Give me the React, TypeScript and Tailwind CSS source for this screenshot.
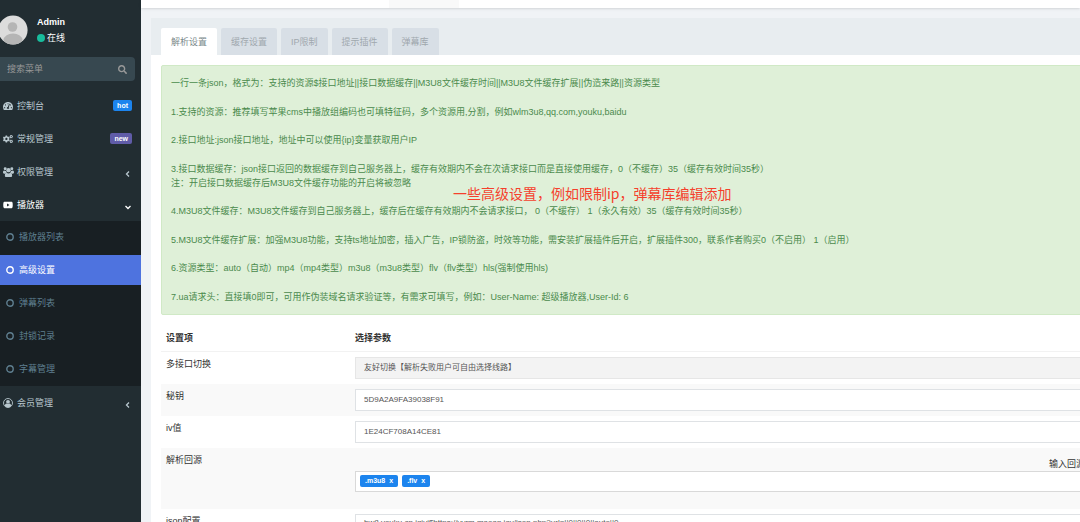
import type { ReactNode } from 'react';
import { FaCogs, FaSearch, FaTachometerAlt, FaYoutube } from 'react-icons/fa';
import clsx from 'clsx';

const tabs = ['解析设置', '缓存设置', 'IP限制', '提示插件', '弹幕库'];

const subMenu = ['播放器列表', '高级设置', '弹幕列表', '封锁记录', '字幕管理'];

const notes = [
  ['一行一条json，格式为：支持的资源$接口地址||接口数据缓存||M3U8文件缓存时间||M3U8文件缓存扩展||伪造来路||资源类型'],
  ['1.支持的资源：推荐填写苹果cms中播放组编码也可填特征码，多个资源用,分割，例如wlm3u8,qq.com,youku,baidu'],
  ['2.接口地址:json接口地址，地址中可以使用{ip}变量获取用户IP'],
  [
    '3.接口数据缓存：json接口返回的数据缓存到自己服务器上，缓存有效期内不会在次请求接口而是直接使用缓存，0（不缓存）35（缓存有效时间35秒）',
    '注：开启接口数据缓存后M3U8文件缓存功能的开启将被忽略',
  ],
  ['4.M3U8文件缓存：M3U8文件缓存到自己服务器上，缓存后在缓存有效期内不会请求接口， 0（不缓存） 1（永久有效）35（缓存有效时间35秒）'],
  ['5.M3U8文件缓存扩展：加强M3U8功能，支持ts地址加密，插入广告，IP锁防盗，时效等功能，需安装扩展插件后开启，扩展插件300，联系作者购买0（不启用） 1（启用）'],
  ['6.资源类型：auto（自动）mp4（mp4类型）m3u8（m3u8类型）flv（flv类型）hls(强制使用hls)'],
  ['7.ua请求头：直接填0即可，可用作伪装域名请求验证等，有需求可填写，例如：User-Name: 超级播放器,User-Id: 6'],
];

const GroupIcon = () => (
  <svg viewBox="0 0 20 18" className="h-[10px] w-[11px]" fill="currentColor" aria-hidden="true">
    <circle cx="4" cy="3.2" r="2.7" />
    <circle cx="16" cy="3.2" r="2.7" />
    <circle cx="10" cy="5.6" r="4" />
    <path d="M0 10.5C0 8 .8 6.4 2 6.4c1.100.9 2.300 1 3.400.6.2 1.600.9 2.700 1.700 3.400-1.300.1-2.300.6-3.100 1.600H2C.7 12 0 11.500 0 10.500z" />
    <path d="M20 10.500C20 8 19.200 6.400 18 6.400c-1.100.9-2.300 1-3.400.6-.2 1.600-.9 2.700-1.700 3.400 1.300.1 2.300.6 3.100 1.600h2c1.300 0 2-.5 2-1.500z" />
    <path d="M3.400 15.600c0-3 1-5.300 3.200-5.300 2.200 1.700 4.600 1.700 6.800 0 2.200 0 3.200 2.300 3.200 5.300 0 1.500-1 2.400-2.500 2.400H5.900c-1.500 0-2.500-.9-2.500-2.400z" />
  </svg>
);

const UserCircleIcon = () => (
  <svg viewBox="0 0 20 20" className="size-[10px]" fill="currentColor" aria-hidden="true">
    <circle cx="10" cy="10" r="9" fill="none" stroke="currentColor" strokeWidth="1.800" />
    <circle cx="10" cy="7.600" r="3.800" />
    <path d="M3.600 15.500c.3-2.600 1.600-4.300 3.400-4.500 1.900 1.500 4.100 1.500 6 0 1.800.2 3.100 1.900 3.400 4.500C14.800 17.500 12.500 18.600 10 18.600s-4.800-1.100-6.400-3.100z" />
  </svg>
);

const Chevron = ({ open }: { open?: boolean }) => (
  <svg
    viewBox="0 0 8 8"
    className="mt-1 size-2"
    fill="none"
    stroke="currentColor"
    strokeWidth="1.3"
    aria-hidden="true"
  >
    <path d={open ? 'M1.500 3L4 5.500L6.500 3' : 'M5 1.500L2.500 4L5 6.500'} />
  </svg>
);

type MenuItemProps = {
  icon: ReactNode;
  label: string;
  active?: boolean;
  children?: ReactNode;
};

const MenuItem = ({ icon, label, active, children }: MenuItemProps) => (
  <a
    href="#"
    className={clsx('flex h-[33px] items-center pl-[3px] pr-[9px]', active ? 'text-white' : 'text-[#b8c7ce]')}
  >
    <span className="w-[14px] text-[10px]">{icon}</span>
    <span className="grow">{label}</span>
    {children}
  </a>
);

const Sidebar = () => (
  <aside className="w-[141px] shrink-0 bg-[#222d32]">
    <div className="flex h-[57px] items-center gap-[9px] pt-[2px]">
      <svg viewBox="0 0 28 30" className="h-[30px] w-7 shrink-0" aria-hidden="true">
        <clipPath id="face">
          <circle cx="13" cy="15" r="14.6" />
        </clipPath>
        <circle cx="13" cy="15" r="14.6" fill="#dcdcdc" />
        <g fill="#b5b5b5" clipPath="url(#face)">
          <circle cx="12.5" cy="12" r="4.8" />
          <ellipse cx="13" cy="25" rx="9.5" ry="6.5" />
        </g>
      </svg>
      <div className="text-white">
        <p className="mb-[2px] font-bold leading-[14px]">Admin</p>
        <p className="flex items-center gap-[2px] leading-[14px]">
          <span className="size-2 rounded-full bg-[#18bc9c]" />
          在线
        </p>
      </div>
    </div>
    <form className="mb-2 mr-[6px] flex h-6 items-center rounded-r-sm bg-[#374850] pr-2">
      <input
        type="text"
        aria-label="搜索菜单"
        placeholder="搜索菜单"
        className="w-full min-w-0 bg-transparent pl-[7px] outline-none placeholder:text-[#999]"
      />
      <button type="button" aria-label="搜索" className="text-[#999]">
        <FaSearch />
      </button>
    </form>
    <nav>
      <MenuItem icon={<FaTachometerAlt />} label="控制台">
        <span className="rounded-xs bg-[#1c84ee] px-1 text-[7px] font-bold leading-[11px] text-white">hot</span>
      </MenuItem>
      <MenuItem icon={<FaCogs />} label="常规管理">
        <span className="rounded-xs bg-[#605ca8] px-1 text-[7px] font-bold leading-[11px] text-white">new</span>
      </MenuItem>
      <MenuItem icon={<GroupIcon />} label="权限管理">
        <Chevron />
      </MenuItem>
      <MenuItem icon={<FaYoutube />} label="播放器" active>
        <Chevron open />
      </MenuItem>
      <ul className="flex flex-col gap-[3px] bg-[#181f23] pb-[2px] pt-px">
        {subMenu.map((label) => (
          <li key={label}>
            <a
              href="#"
              className={clsx(
                'flex h-[30px] items-center gap-[5px] pl-[6px]',
                label === '高级设置' ? 'bg-[#4e73df] text-white' : 'text-[#5f7f90]',
              )}
            >
              <svg viewBox="0 0 8 8" className="size-2" fill="none" stroke="currentColor" strokeWidth="1.4">
                <circle cx="4" cy="4" r="3.2" />
              </svg>
              {label}
            </a>
          </li>
        ))}
      </ul>
      <MenuItem icon={<UserCircleIcon />} label="会员管理">
        <Chevron />
      </MenuItem>
    </nav>
  </aside>
);

type RowProps = {
  label: string;
  htmlFor: string;
  striped?: boolean;
  children: ReactNode;
};

const Row = ({ label, htmlFor, striped, children }: RowProps) => (
  <tr className={clsx('align-top', striped && 'bg-[#f9f9f9]')}>
    <td className="p-[5px]">
      <label htmlFor={htmlFor} className="block leading-[14px]">
        {label}
      </label>
    </td>
    <td className="p-[5px]">{children}</td>
  </tr>
);

const Tag = ({ name }: { name: string }) => (
  <span className="flex h-3 items-center gap-1 rounded-xs bg-[#1c84ee] px-[5px] text-[7px] font-bold text-white">
    {name}
    <button type="button" aria-label={`删除 ${name}`}>
      x
    </button>
  </span>
);

const field = 'block h-[22px] w-full border px-2 text-[8px] text-[#555] outline-none';

const SettingsTable = () => (
  <table className="w-full table-fixed border-collapse text-[#333]">
    <thead>
      <tr className="h-[26px] border-b border-[#f2f2f2] text-left">
        <th className="w-[189px] px-[5px]">设置项</th>
        <th className="px-[5px]">选择参数</th>
      </tr>
    </thead>
    <tbody>
      <Row label="多接口切换" htmlFor="switch">
        <select id="switch" className={clsx(field, 'appearance-none border-[#e6e6e6] bg-[#f3f3f3]')}>
          <option>友好切换【解析失败用户可自由选择线路】</option>
        </select>
      </Row>
      <Row label="秘钥" htmlFor="key" striped>
        <input id="key" defaultValue="5D9A2A9FA39038F91" className={clsx(field, 'border-[#dfe2e5] bg-white')} />
      </Row>
      <Row label="iv值" htmlFor="iv">
        <input id="iv" defaultValue="1E24CF708A14CE81" className={clsx(field, 'border-[#dfe2e5] bg-white')} />
      </Row>
      <Row label="解析回源" htmlFor="source" striped>
        <p className="pt-1 text-right leading-[14px]">输入回源</p>
        <div className="mb-3 flex h-[21px] items-center gap-1 border border-[#d9d9d9] bg-white px-1">
          <Tag name=".m3u8" />
          <Tag name=".flv" />
          <input id="source" className="min-w-0 grow outline-none" />
        </div>
      </Row>
      <Row label="json配置" htmlFor="json">
        <textarea
          id="json"
          rows={5}
          defaultValue="bw8.youku.cn,iqiyi$https://yyrm.maoan.jav/json.php?url=||0||0||0||auto||0"
          className="block w-full resize-none border border-[#dfe2e5] bg-white px-2 py-[2px] text-[8px] leading-[12px] text-[#555] outline-none"
        />
      </Row>
    </tbody>
  </table>
);

const App = () => (
  <div className="flex h-screen overflow-hidden bg-[#f0f3f6] font-['Liberation_Sans','Noto_Sans_CJK_SC',sans-serif] text-[9px] leading-[14px]">
    <Sidebar />
    <main className="min-w-0 grow">
      <header className="h-2 bg-white shadow-sm">
        <div className="ml-[248px] h-full w-[70px] bg-[#f9f9f9]" />
      </header>
      <section className="-mr-5 ml-[10px] mt-[10px] bg-white">
        <div role="tablist" className="flex h-[37px] items-end gap-1 bg-[#e8edf0] px-[10px]">
          {tabs.map((tab, i) => (
            <button
              key={tab}
              type="button"
              role="tab"
              aria-selected={i === 0}
              className={clsx(
                'h-[27px] rounded-t-xs px-[10px]',
                i === 0 ? 'bg-white text-[#7b8a8b]' : 'bg-[#d8dfe6] text-[#a0a8ae]',
              )}
            >
              {tab}
            </button>
          ))}
        </div>
        <div className="p-[10px]">
          <div className="relative mb-[10px] flex min-h-[250px] flex-col justify-between rounded-xs border border-[#d0e9c6] bg-[#dff0d8] px-[9px] py-[10px] text-[#4a8a4c]">
            {notes.map((lines) => (
              <div key={lines[0]} className="whitespace-nowrap">
                {lines.map((line) => (
                  <p key={line}>{line}</p>
                ))}
              </div>
            ))}
            <p className="absolute left-[291px] top-[117px] whitespace-nowrap font-['Noto_Sans_CJK_SC',sans-serif] text-[14px] leading-[20px] text-[#f5402c]">
              一些高级设置，例如限制ip，弹幕库编辑添加
            </p>
          </div>
          <SettingsTable />
        </div>
      </section>
    </main>
  </div>
);

export default App;
